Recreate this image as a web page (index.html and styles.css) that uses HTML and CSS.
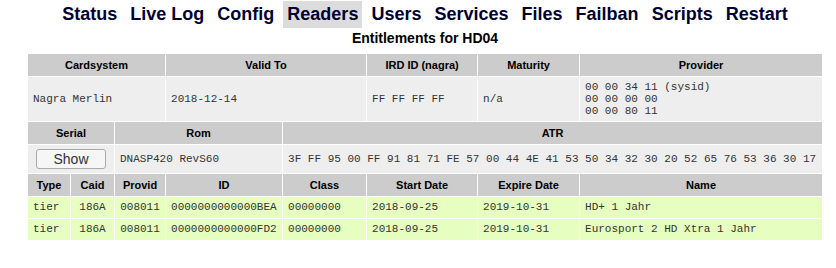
FILE: index.html
```html
<!DOCTYPE html>
<html>
<head>
<meta charset="utf-8">
<link rel="stylesheet" href="styles.css">
</head>
<body>
<div class="page">
  <nav class="menu">
    <a class="link">Status</a> <a class="link">Live Log</a> <a class="link">Config</a> <a class="link sel">Readers</a> <a class="link">Users</a> <a class="link">Services</a> <a class="link">Files</a> <a class="link">Failban</a> <a class="link">Scripts</a> <a class="link">Restart</a>
  </nav>
  <div class="title">Entitlements for HD04</div>
  <table class="ent">
    <colgroup>
      <col class="c1"><col class="c2"><col class="c3"><col class="c4"><col class="c5"><col class="c6"><col class="c7"><col class="c8">
    </colgroup>
    <tr>
      <th colspan="3">Cardsystem</th>
      <th colspan="2">Valid To</th>
      <th>IRD ID (nagra)</th>
      <th>Maturity</th>
      <th>Provider</th>
    </tr>
    <tr class="info">
      <td colspan="3">Nagra Merlin</td>
      <td colspan="2">2018-12-14</td>
      <td>FF FF FF FF</td>
      <td>n/a</td>
      <td class="prov">00 00 34 11 (sysid)<br>00 00 00 00<br>00 00 80 11</td>
    </tr>
    <tr>
      <th colspan="2">Serial</th>
      <th colspan="2">Rom</th>
      <th colspan="4">ATR</th>
    </tr>
    <tr class="info">
      <td colspan="2" class="center"><button class="btn" type="button">Show</button></td>
      <td colspan="2">DNASP420 RevS60</td>
      <td colspan="4">3F FF 95 00 FF 91 81 71 FE 57 00 44 4E 41 53 50 34 32 30 20 52 65 76 53 36 30 17</td>
    </tr>
    <tr>
      <th>Type</th>
      <th>Caid</th>
      <th>Provid</th>
      <th>ID</th>
      <th>Class</th>
      <th>Start Date</th>
      <th>Expire Date</th>
      <th>Name</th>
    </tr>
    <tr class="valid">
      <td>tier</td>
      <td class="center">186A</td>
      <td class="center">008011</td>
      <td>0000000000000BEA</td>
      <td>00000000</td>
      <td>2018-09-25</td>
      <td>2019-10-31</td>
      <td>HD+ 1 Jahr</td>
    </tr>
    <tr class="valid">
      <td>tier</td>
      <td class="center">186A</td>
      <td class="center">008011</td>
      <td>0000000000000FD2</td>
      <td>00000000</td>
      <td>2018-09-25</td>
      <td>2019-10-31</td>
      <td>Eurosport 2 HD Xtra 1 Jahr</td>
    </tr>
  </table>
</div>
</body>
</html>
```

FILE: styles.css
```css
html, body {
  margin: 0;
  padding: 0;
  background: #ffffff;
}
.page {
  margin-left: 27px;
  width: 796px;
  font-family: "Liberation Sans", Arial, sans-serif;
}
.menu {
  margin-top: 1px;
  text-align: center;
  font-size: 18px;
  font-weight: bold;
  white-space: nowrap;
}
.link {
  display: inline-block;
  padding: 3px 4px;
  color: #000033;
  text-decoration: none;
}
.link.sel {
  background: #dcdcdc;
}
.title {
  margin-top: 2px;
  text-align: center;
  font-size: 14px;
  font-weight: bold;
  color: #000;
}
.ent {
  margin-top: 7px;
  width: 796px;
  table-layout: fixed;
  border-collapse: separate;
  border-spacing: 1px;
}
.c1 { width: 42px; }
.c2 { width: 43px; }
.c3 { width: 50px; }
.c4 { width: 116px; }
.c5 { width: 83px; }
.c6 { width: 110px; }
.c7 { width: 101px; }
.c8 { width: 242px; }
.ent th {
  background: #cccccc;
  font-family: "Liberation Sans", Arial, sans-serif;
  font-size: 11px;
  font-weight: bold;
  color: #000;
  line-height: 12px;
  padding: 5px 4px;
  text-align: center;
  white-space: nowrap;
}
.ent td {
  font-family: "Liberation Mono", "Courier New", monospace;
  font-size: 11px;
  color: #333;
  padding: 4px 5px;
  text-align: left;
  white-space: nowrap;
  overflow: hidden;
}
.info td {
  background: #eeeeee;
}
.valid td {
  background: #e6febf;
  line-height: 13px;
}
.ent td.center {
  text-align: center;
}
.btn {
  width: 70px;
  height: 20px;
  padding: 0;
  font-family: "Liberation Sans", Arial, sans-serif;
  font-size: 14px;
  color: #333;
  background: #f6f6f6;
  border: 1px solid #a9a9a9;
  border-radius: 3px;
  vertical-align: middle;
}
```
